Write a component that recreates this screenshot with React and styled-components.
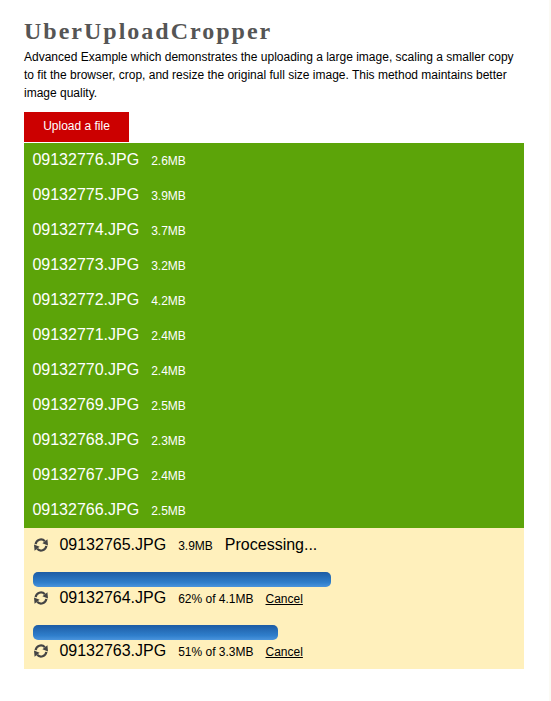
import React from 'react';
import styled, { createGlobalStyle } from 'styled-components';

const Global = createGlobalStyle`
  html, body { margin: 0; padding: 0; background: #fff; }
  body { font-family: "Liberation Sans", Arial, sans-serif; color: #000; }
`;
const Page = styled.div`
  width: 500px;
  height: 701px;
  padding: 0 25px 0 24px;
  border-right: 2px solid #fbfaf4;
  overflow: hidden;
  box-sizing: content-box;
`;
const Title = styled.h1`
  margin: 0;
  padding-top: 18px;
  font: bold 24px/27px "Liberation Serif", "Times New Roman", serif;
  letter-spacing: 2px;
  color: #555;
`;
const Intro = styled.p`
  margin: 3px 0 0;
  font-size: 12px;
  line-height: 18px;
`;
const UploadButton = styled.button`
  display: block;
  width: 105px;
  height: 30px;
  margin: 10px 0 1px;
  padding: 0 0 2px;
  border: 0;
  background: #cc0000;
  color: #fff;
  font: 12px "Liberation Sans", Arial, sans-serif;
`;
const List = styled.ul`
  margin: 0;
  padding: 0;
  list-style: none;
`;
const DoneRow = styled.li`
  display: flex;
  align-items: baseline;
  height: 35px;
  padding: 7px 8.4px 0;
  box-sizing: border-box;
  background: #5ca409;
  color: #fff;
`;
const QueueRow = styled.li`
  height: ${p => p.$height}px;
  padding: ${p => p.$top || 0}px 9px 0;
  box-sizing: border-box;
  background: #fff0bc;
`;
const Line = styled.div`
  display: flex;
  align-items: baseline;
  height: 20px;
`;
const Name = styled.span`
  font-size: 16px;
  line-height: 20px;
`;
const Size = styled.span`
  font-size: 12px;
  margin-left: 12px;
`;
const Status = styled.span`
  font-size: 16px;
  margin-left: 12px;
`;
const Cancel = styled.a`
  font-size: 12px;
  margin-left: 12px;
  color: #000;
  text-decoration: underline;
`;
const Bar = styled.div`
  height: 15px;
  border-radius: 5px;
  background: linear-gradient(#1d5ca4, #2f7ecb 70%, #4a94dc);
  margin-bottom: 1px;
`;
const SpinSvg = styled.svg`
  width: 14px;
  height: 14px;
  margin: 0 11.4px 0 1px;
  align-self: center;
  flex: none;
`;
const Spin = () => (
  <SpinSvg viewBox="1 1 12 12" aria-hidden="true">
    <g fill="#444">
      <path d="M2.4 6.2A4.6 4.6 0 0 1 10.3 3.7" fill="none" stroke="#444" strokeWidth="1.9" />
      <path d="M8.2 5.6 12.5 2 13 7.4Z" />
      <path d="M11.6 7.8A4.6 4.6 0 0 1 3.7 10.3" fill="none" stroke="#444" strokeWidth="1.9" />
      <path d="M5.8 8.4 1.5 12 1 6.6Z" />
    </g>
  </SpinSvg>
);

const done = [
  ['09132776.JPG', '2.6MB'], ['09132775.JPG', '3.9MB'], ['09132774.JPG', '3.7MB'],
  ['09132773.JPG', '3.2MB'], ['09132772.JPG', '4.2MB'], ['09132771.JPG', '2.4MB'],
  ['09132770.JPG', '2.4MB'], ['09132769.JPG', '2.5MB'], ['09132768.JPG', '2.3MB'],
  ['09132767.JPG', '2.4MB'], ['09132766.JPG', '2.5MB'],
];

export default function App() {
  return (
    <Page>
      <Global />
      <Title>UberUploadCropper</Title>
      <Intro>Advanced Example which demonstrates the uploading a large image, scaling a smaller copy to fit the browser, crop, and resize the original full size image. This method maintains better image quality.</Intro>
      <UploadButton>Upload a file</UploadButton>
      <List>
        {done.map(([n, s]) => (
          <DoneRow key={n}><Name>{n}</Name><Size>{s}</Size></DoneRow>
        ))}
        <QueueRow $height={44} $top={7}>
          <Line><Spin /><Name>09132765.JPG</Name><Size>3.9MB</Size><Status>Processing...</Status></Line>
        </QueueRow>
        <QueueRow $height={53}>
          <Bar style={{ width: 298 }} />
          <Line><Spin /><Name>09132764.JPG</Name><Size>62% of 4.1MB</Size><Cancel>Cancel</Cancel></Line>
        </QueueRow>
        <QueueRow $height={44}>
          <Bar style={{ width: 245 }} />
          <Line><Spin /><Name>09132763.JPG</Name><Size>51% of 3.3MB</Size><Cancel>Cancel</Cancel></Line>
        </QueueRow>
      </List>
    </Page>
  );
}
